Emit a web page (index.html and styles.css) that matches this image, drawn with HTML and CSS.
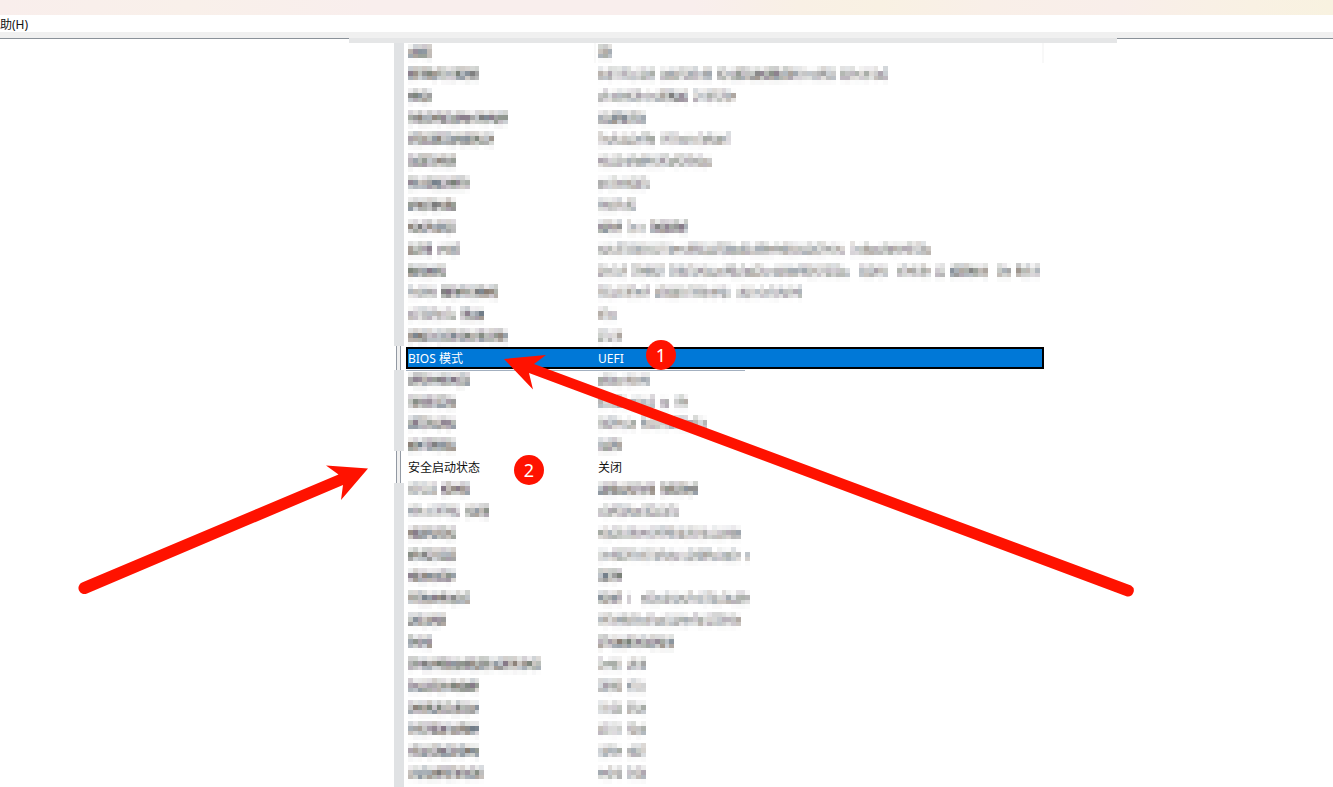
FILE: index.html
```html
<!DOCTYPE html>
<html lang="zh-CN">
<head>
    <meta charset="UTF-8">
    <meta name="viewport" content="width=device-width, initial-scale=1.0">
    <title>系统信息</title>
    <link rel="stylesheet" href="styles.css">
</head>
<body>
    <div class="window">
        <div class="titlebar"></div>
        <nav class="menubar">
            <button type="button" class="menu-item">帮助(H)</button>
        </nav>
        <div class="toolbar"></div>

        <main class="content">
            <div class="edge"><span class="edge-cover"></span></div>
            <div class="panes">
                <aside class="tree"></aside>
                <div class="splitter">
                    <span class="cover cover-top"></span>
                    <span class="cover cover-middle"></span>
                    <span class="cover cover-bottom"></span>
                </div>
                <table class="details">
                    <thead>
                        <tr><th data-mask="c5"></th><th data-mask="c3"></th></tr>
                    </thead>
                    <tbody id="rows"></tbody>
                </table>
            </div>
        </main>

        <svg class="arrows" aria-hidden="true">
            <path d="M504 359L546 355L534 364L1131 585.5A6 6 0 0 1 1127 596.5L529 373L533 389.5Z"/>
            <path d="M368 468.5L326 465.5L338.5 474.5L82 582.5A6 6 0 0 0 87 593.5L343 485L341 500Z"/>
        </svg>
        <span class="badge badge-one">1</span>
        <span class="badge badge-two">2</span>
    </div>

    <script src="script.js"></script>
</body>
</html>
```

FILE: styles.css
```css
* {
    box-sizing: border-box;
}
body {
    margin: 0;
    font-family: "Noto Sans", "Noto Sans CJK SC", sans-serif;
    font-size: 12px;
    color: #111;
    background-color: #fff;
}
.window {
    position: relative;
    display: flex;
    flex-direction: column;
    min-height: 100vh;
    overflow: hidden;
}
.titlebar {
    height: 15px;
    background: linear-gradient(90deg, #f9eeec, #f9f0ea 14%, #f9eeed 28%, #f9eeed 52%, #f9f0e5 60%, #f9f1e3 66%, #f9efe8 74%, #f9eeea 84%, #f9f1e3 94%, #f8f2e0);
}
.menubar {
    display: flex;
    height: 17px;
    background-color: #fff;
}
.menu-item {
    margin-left: -12px;
    padding: 1px 0 0;
    border: none;
    background: none;
    font-family: inherit;
    font-size: 12px;
    line-height: 17px;
    color: #111;
}
.toolbar {
    height: 6px;
    background-color: #f0f0f0;
}
.content {
    flex: 1;
    display: flex;
    flex-direction: column;
}
.edge {
    height: 5px;
    padding: 0 216px 0 349px;
    border-top: 1px solid #8a9199;
}
.edge-cover {
    display: block;
    height: 5px;
    margin-top: -1px;
    background-color: #e5e6e7;
}
.panes {
    flex: 1;
    display: flex;
}
.tree {
    width: 394px;
}
.splitter {
    display: flex;
    flex-direction: column;
    width: 10px;
    background: linear-gradient(90deg, #fff 2px, #9299a3 2px, #9299a3 3px, #f0f0f0 3px, #f0f0f0 6px, #9299a3 6px, #9299a3 7px, #fff 7px);
}
.cover {
    background-color: #e0e2e4;
}
.cover-top {
    height: 303px;
    margin-bottom: 24px;
}
.cover-middle {
    height: 81px;
    margin-bottom: 32px;
}
.cover-bottom {
    flex: 1;
}

/* system summary list */
.details {
    display: flex;
    flex-direction: column;
    width: 640px;
    padding: 0 0 3px 2px;
}
.details tr {
    display: grid;
    grid-template-columns: 190px 1fr;
    align-items: center;
}
.details thead tr {
    height: 20px;
}
.details tbody {
    flex: 1;
    display: grid;
    grid-auto-rows: 1fr;
}
.details th,
.details td {
    height: 20px;
    padding: 1px 2px 0;
    font-weight: normal;
    line-height: 20px;
    text-align: left;
    white-space: nowrap;
}
.details th {
    padding-top: 0;
    border-right: 2px solid #f8f8f8;
}
.details .selected {
    color: #fff;
    background-color: #0078d7;
    outline: 2px solid #000;
    outline-offset: -2px;
}
.details .selected + tr {
    background: linear-gradient(#a3b0c0, #a3b0c0) no-repeat 0 1px / 339px 1px;
}
.mosaic {
    display: block;
    height: 19px;
    margin-top: 1px;
    shape-rendering: crispEdges;
}

/* callouts */
.arrows {
    position: absolute;
    top: 0;
    left: 0;
    width: 100%;
    height: 100%;
    fill: #ff1200;
    pointer-events: none;
}
.badge {
    position: absolute;
    width: 30px;
    height: 30px;
    border-radius: 50%;
    background-color: #ff1200;
    color: #fff;
    font-size: 18px;
    line-height: 30px;
    text-align: center;
}
.badge-one {
    top: 340px;
    left: 646px;
}
.badge-two {
    top: 455px;
    left: 514px;
}
```

FILE: script.js
```js
// c = dense run, l = light run, g = gap, followed by the number of tiles
const rows = [
    ['c15', 'l12 g1 l11 g1 l3 c13 l9 g1 l10'],
    ['c5', 'l13 c6 g1 l9'],
    ['c21', 'c10'],
    ['c18', 'l12 g1 l15'],
    ['c10', 'l24'],
    ['c13', 'l11'],
    ['c10', 'l8'],
    ['c10', 'c5 g1 l4 g1 c8'],
    ['c5 g1 l5', 'l52 g1 l17'],
    ['c8', 'l6 g1 l7 g1 l38 g2 l6 g2 l7 g1 l2 g1 c8 g2 l3 g1 c3 l2'],
    ['l6 g1 c12', 'l11 g1 l16 g1 l14'],
    ['l10 g1 c5', 'l4'],
    ['c21', 'l5'],
    { name: 'BIOS 模式', value: 'UEFI', selected: true },
    ['c13', 'l11'],
    ['c10', 'l12 g1 l2 g1 l3'],
    ['c10', 'l8 g1 l14'],
    ['c10', 'c5'],
    { name: '安全启动状态', value: '关闭' },
    ['l6 g1 c6', 'c12 g1 c8'],
    ['l11 g1 c5', 'l17'],
    ['c10', 'l30'],
    ['c10', 'l30 g1 l1'],
    ['c10', 'c5'],
    ['c13', 'c5 g1 l1 g2 l23'],
    ['c8', 'l30'],
    ['c5', 'c16'],
    ['c28', 'l5 g1 l4'],
    ['c15', 'l5 g1 l4'],
    ['c15', 'l5 g1 l4'],
    ['c15', 'l5 g1 l4'],
    ['c15', 'l5 g1 l4'],
    ['c16', 'l5 g1 l4']
];

const tints = [[115, 115, 115], [130, 118, 108], [106, 118, 130], [124, 110, 126], [114, 122, 112]];
let seed = 7;

function random() {
    seed = (seed * 16807) % 2147483647;
    return seed / 2147483647;
}

// Darkness range of the four tile lines, top to bottom
const levels = {
    c: [[0.1, 0.4], [0.4, 0.95], [0.3, 0.75], [0, 0.08]],
    l: [[0, 0.3], [0.25, 0.65], [0.2, 0.55], [0, 0.05]]
};

function mosaic(pattern) {
    let x = 0;
    let tiles = '';
    pattern.split(' ').forEach((run) => {
        const kind = run[0];
        const end = x + Number(run.slice(1));
        for (; x < end; x++) {
            if (kind === 'g') continue;
            levels[kind].forEach(([min, max], y) => {
                const dark = min + random() * (max - min);
                const tint = tints[Math.floor(random() * tints.length)];
                const color = tint.map((c) => Math.round(255 - (255 - c) * dark)).join(',');
                tiles += `<rect x="${x}" y="${y}" width="1" height="1" fill="rgb(${color})"/>`;
            });
        }
    });
    return `<svg class="mosaic" viewBox="0 0 ${x} 4" aria-hidden="true">${tiles}</svg>`;
}

document.querySelectorAll('[data-mask]').forEach((cell) => {
    cell.innerHTML = mosaic(cell.dataset.mask);
});

const body = document.getElementById('rows');
rows.forEach((row) => {
    const tr = document.createElement('tr');
    if (Array.isArray(row)) {
        tr.innerHTML = row.map((pattern) => `<td>${mosaic(pattern)}</td>`).join('');
    } else {
        tr.innerHTML = `<td>${row.name}</td><td>${row.value}</td>`;
        if (row.selected) tr.className = 'selected';
    }
    body.appendChild(tr);
});
```
